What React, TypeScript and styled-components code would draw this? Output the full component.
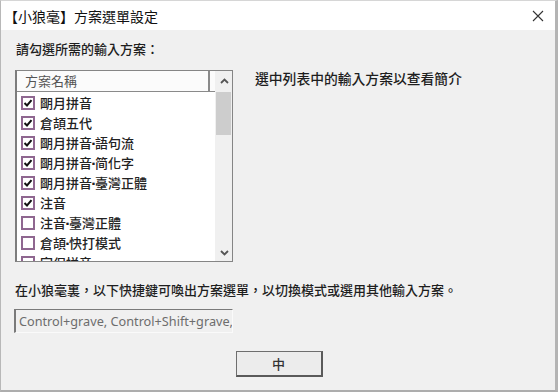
import React from "react";
import styled, { createGlobalStyle } from "styled-components";

const CJK = `"Noto Sans CJK TC", "Noto Sans CJK SC", sans-serif`;

const Global = createGlobalStyle`
  html, body { margin: 0; padding: 0; background: #ffffff; }
  body { font-family: ${CJK}; }
`;

const Window = styled.div`
  width: 558px;
  height: 392px;
  box-sizing: border-box;
  display: flex;
  flex-direction: column;
  border-top: 1px solid #d6d6d6;
  border-left: 1px solid #b8b8b8;
  border-right: 3px solid #b4b4b4;
  border-bottom: 2px solid #adadad;
  overflow: hidden;
`;

const TitleBar = styled.div`
  flex: none;
  height: 29px;
  background: #ffffff;
  display: flex;
  align-items: center;
  justify-content: space-between;
  padding: 0 11px 0 3px;
`;

const Title = styled.div`
  font: 14px/18px ${CJK};
  color: #111;
`;

const Body = styled.div`
  flex: 1;
  background: #f0f0f0;
  display: flex;
  flex-direction: column;
  padding: 10px 11px 0 13px;
`;

const Label = styled.div<{ $indent?: number }>`
  font: 500 13px/18px ${CJK};
  color: #1e1e1e;
  margin-left: ${(p) => p.$indent ?? 0}px;
  white-space: nowrap;
`;

const TopRow = styled.div`
  display: flex;
  align-items: flex-start;
  margin-top: 12px;
`;

const ListBox = styled.div`
  margin-left: 1px;
  width: 218px;
  height: 192px;
  box-sizing: border-box;
  border: 1px solid #858585;
  border-left: 2px solid #7d7d7d;
  background: #ffffff;
  display: grid;
  grid-template-columns: 1fr 17px;
  overflow: hidden;
`;

const ListMain = styled.div`
  display: flex;
  flex-direction: column;
  overflow: hidden;
`;

const Header = styled.div`
  flex: none;
  height: 20px;
  display: flex;
  border-bottom: 1px solid #8a8a8a;
  background: #fbfbfb;
`;

const HeaderCell = styled.div`
  width: 183px;
  padding-left: 8px;
  border-right: 2px solid #8a8a8a;
  font: 13px/20px ${CJK};
  color: #555;
`;

const Rows = styled.div`
  padding-top: 1px;
  display: flex;
  flex-direction: column;
`;

const Row = styled.div`
  flex: none;
  height: 20px;
  display: flex;
  align-items: center;
  gap: 5px;
  padding-left: 4px;
  font: 500 13px/20px ${CJK};
  color: #222;
  white-space: nowrap;
`;

const Dot = styled.span`
  font-family: "DejaVu Sans", sans-serif;
  font-weight: 700;
  margin: 0 -1px;
`;

const Box = styled.span`
  flex: none;
  width: 14px;
  height: 14px;
  box-sizing: border-box;
  border: 2px solid #8f6790;
  background: #ffffff;
  display: flex;
  align-items: center;
  justify-content: center;
`;

const ScrollBar = styled.div`
  background: #f0f0f0;
  display: flex;
  flex-direction: column;
  border-left: 1px solid #f0f0f0;
`;

const ScrollBtn = styled.div<{ $h: number }>`
  flex: none;
  height: ${(p) => p.$h}px;
  display: flex;
  align-items: center;
  justify-content: center;
`;

const Thumb = styled.div`
  flex: none;
  height: 43px;
  margin: 1px 1px 0 0;
  background: #cdcdcd;
`;

const Spacer = styled.div`
  flex: 1;
`;

const Description = styled.div`
  margin-left: 22px;
  margin-top: 1px;
  font: 500 13.8px/14px ${CJK};
  color: #1e1e1e;
  white-space: nowrap;
`;

const BottomLabel = styled(Label)`
  margin-top: 19px;
`;

const Field = styled.div`
  margin-top: 10px;
  width: 219px;
  height: 24px;
  box-sizing: border-box;
  border-top: 1px solid #7a7a7a;
  border-left: 2px solid #7a7a7a;
  border-right: 1px solid #fafafa;
  border-bottom: 1px solid #fafafa;
  background: #f0f0f0;
  padding-left: 3px;
  font: 12.7px/22px "Noto Sans", "Open Sans", sans-serif;
  color: #6d6d6d;
  white-space: nowrap;
  overflow: hidden;
`;

const ButtonRow = styled.div`
  margin-top: 18px;
  display: flex;
  justify-content: center;
`;

const Button = styled.div`
  width: 87px;
  height: 26px;
  box-sizing: border-box;
  border: 1px solid #6e6e6e;
  border-right: 2px solid #5a5a5a;
  border-bottom: 2px solid #5a5a5a;
  background: #ececec;
  display: flex;
  align-items: center;
  justify-content: center;
  font: 500 13px/18px ${CJK};
  color: #333;
`;

const items: { parts: string[]; checked: boolean }[] = [
  { parts: ["朙月拼音"], checked: true },
  { parts: ["倉頡五代"], checked: true },
  { parts: ["朙月拼音", "語句流"], checked: true },
  { parts: ["朙月拼音", "简化字"], checked: true },
  { parts: ["朙月拼音", "臺灣正體"], checked: true },
  { parts: ["注音"], checked: true },
  { parts: ["注音", "臺灣正體"], checked: false },
  { parts: ["倉頡", "快打模式"], checked: false },
  { parts: ["宮保拼音"], checked: false },
];

const Check = () => (
  <svg width="10" height="10" viewBox="0 0 10 10">
    <path d="M1.5 5 L4 7.5 L8.5 2.2" fill="none" stroke="#111" strokeWidth="2" />
  </svg>
);

const Chevron = ({ up }: { up?: boolean }) => (
  <svg width="9" height="6" viewBox="0 0 9 6">
    <path
      d={up ? "M1 5 L4.5 1.5 L8 5" : "M1 1 L4.5 4.5 L8 1"}
      fill="none"
      stroke="#555"
      strokeWidth="1.8"
    />
  </svg>
);

const CloseIcon = () => (
  <svg width="12" height="12" viewBox="0 0 12 12">
    <path d="M1 1 L11 11 M11 1 L1 11" stroke="#333" strokeWidth="1.1" />
  </svg>
);

export default function App() {
  return (
    <>
      <Global />
      <Window>
        <TitleBar>
          <Title>【小狼毫】方案選單設定</Title>
          <CloseIcon />
        </TitleBar>
        <Body>
          <Label $indent={2}>請勾選所需的輸入方案：</Label>
          <TopRow>
            <ListBox>
              <ListMain>
                <Header>
                  <HeaderCell>方案名稱</HeaderCell>
                </Header>
                <Rows>
                  {items.map((it) => (
                    <Row key={it.parts.join("·")}>
                      <Box>{it.checked && <Check />}</Box>
                      <span>
                        {it.parts.map((p, i) => (
                          <React.Fragment key={p}>
                            {i > 0 && <Dot>·</Dot>}
                            {p}
                          </React.Fragment>
                        ))}
                      </span>
                    </Row>
                  ))}
                </Rows>
              </ListMain>
              <ScrollBar>
                <ScrollBtn $h={20}>
                  <Chevron up />
                </ScrollBtn>
                <Thumb />
                <Spacer />
                <ScrollBtn $h={17}>
                  <Chevron />
                </ScrollBtn>
              </ScrollBar>
            </ListBox>
            <Description>選中列表中的輸入方案以查看簡介</Description>
          </TopRow>
          <BottomLabel $indent={1}>
            在小狼毫裏，以下快捷鍵可喚出方案選單，以切換模式或選用其他輸入方案。
          </BottomLabel>
          <Field>Control+grave, Control+Shift+grave,</Field>
          <ButtonRow>
            <Button>中</Button>
          </ButtonRow>
        </Body>
      </Window>
    </>
  );
}
